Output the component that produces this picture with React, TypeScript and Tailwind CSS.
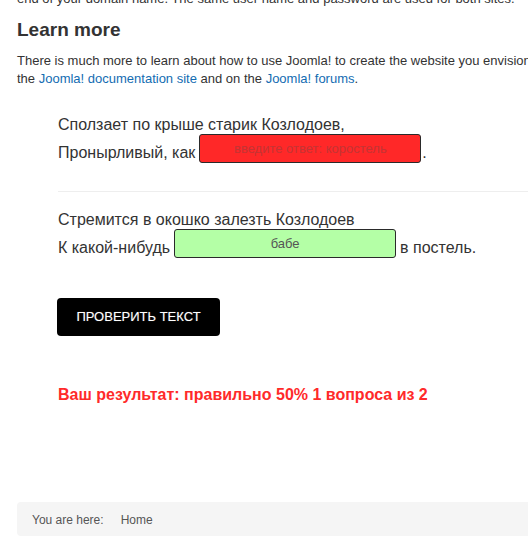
import React from 'react';

const Question: React.FC<{
  first: string;
  before: string;
  after: string;
  value?: string;
  placeholder?: string;
  tone: 'wrong' | 'right';
}> = ({ first, before, after, value, placeholder, tone }) => (
  <div className="text-[16px]">
    <div className="leading-[18px] whitespace-nowrap">{first}</div>
    <div className="flex items-end whitespace-nowrap">
      <span className="leading-[20px]">{before}</span>
      <input
        readOnly
        value={value ?? ''}
        placeholder={placeholder}
        className={`ml-[4px] h-[29px] w-[222px] rounded-[3px] border border-[#2a2a2a] text-center text-[13px] outline-none ${
          tone === 'wrong'
            ? 'bg-[#ff2828] placeholder:text-[#c43434]'
            : 'bg-[#b4ffa6] text-[#555]'
        }`}
      />
      <span className={`leading-[20px] ${after === '.' ? 'ml-[1px]' : 'ml-[4px]'}`}>{after}</span>
    </div>
  </div>
);

export default function App() {
  return (
    <div className="w-[528px] h-[543px] overflow-hidden bg-white text-[#333] font-['Liberation_Sans',Arial,sans-serif]">
      <div className="-mt-[10px] w-[620px] px-[17px]">
        <p className="text-[13px] leading-[18px] whitespace-nowrap">
          end of your domain name. The same user name and password are used for both sites.
        </p>

        <h2 className="mt-[10px] text-[19px] font-bold leading-[23px] text-[#333]">Learn more</h2>

        <p className="mt-[11px] text-[13px] leading-[18px] whitespace-nowrap">
          There is much more to learn about how to use Joomla! to create the website you envisioned. You can learn much more at
          <br />
          the <a className="text-[#136cb2]">Joomla! documentation site</a> and on the{' '}
          <a className="text-[#136cb2]">Joomla! forums</a>.
        </p>

        <div className="mt-[28px] pl-[41px]">
          <Question
            first="Сползает по крыше старик Козлодоев,"
            before="Пронырливый, как"
            placeholder="введите ответ: коростель"
            after="."
            tone="wrong"
          />

          <div className="mt-[28px] h-px bg-[#eeeeee]" />

          <div className="mt-[19px]">
            <Question
              first="Стремится в окошко залезть Козлодоев"
              before="К какой-нибудь"
              value="бабе"
              after="в постель."
              tone="right"
            />
          </div>

          <button className="-ml-px mt-[40px] h-[38px] w-[163px] rounded-[4px] bg-black text-[13px] text-white [text-shadow:0_0_1px_rgba(255,255,255,0.35)]">
            ПРОВЕРИТЬ ТЕКСТ
          </button>

          <div className="mt-[50px] text-[16px] font-bold leading-[18px] text-[#ff2a2a] whitespace-nowrap">
            Ваш результат: правильно 50% 1 вопроса из 2
          </div>
        </div>

        <div className="mt-[98px] rounded-[4px] bg-[#f5f5f5] px-[15px] pt-[9px] pb-[7px] text-[12px] leading-[18px] text-[#555]">
          You are here:<span className="ml-[17px]">Home</span>
        </div>
      </div>
    </div>
  );
}
